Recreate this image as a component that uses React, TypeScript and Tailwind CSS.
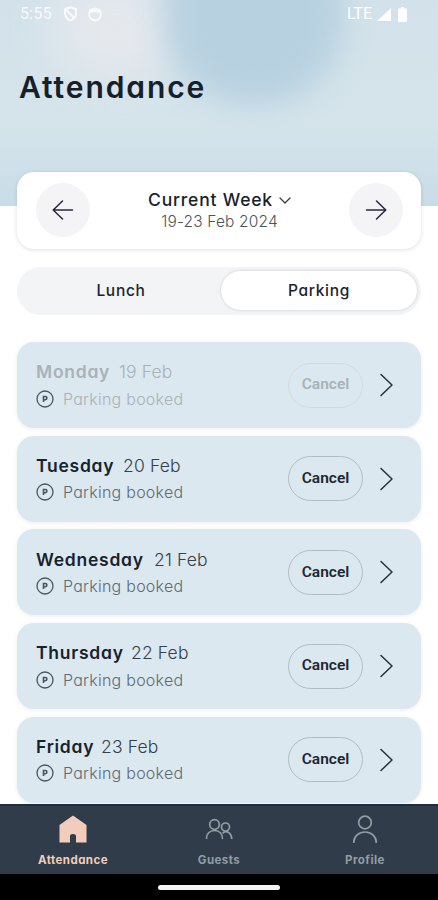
import React from "react";

type Day = { name: string; date: string; past?: boolean; nameClass: string };

const days: Day[] = [
  { name: "Monday", date: "19 Feb", past: true, nameClass: "w-[74px]" },
  { name: "Tuesday", date: "20 Feb", nameClass: "w-[78px]" },
  { name: "Wednesday", date: "21 Feb", nameClass: "w-[109px]" },
  { name: "Thursday", date: "22 Feb", nameClass: "w-[86px]" },
  { name: "Friday", date: "23 Feb", nameClass: "w-[56px]" },
];

function StatusBar() {
  return (
    <div className="relative flex h-[28px] items-center px-[20px] text-white">
      <span className="w-[32px] whitespace-nowrap font-['Roboto'] text-[16px] tracking-[0.3px] opacity-80">5:55</span>
      <svg className="ml-[11px] opacity-80" width="15" height="16" viewBox="0 0 15 16" fill="none" stroke="currentColor" strokeWidth="2">
        <path d="M7.5 1.2 13 3v4.6c0 3.2-2.2 5.6-5.5 7-3.3-1.4-5.5-3.8-5.5-7V3z" />
        <path d="M3 3.5 11 12" />
      </svg>
      <svg className="ml-[9px] opacity-80" width="16" height="16" viewBox="0 0 16 16" fill="none" stroke="currentColor" strokeWidth="1.8">
        <circle cx="8" cy="8.5" r="5.9" />
        <path d="M2.500 2.500 5 3.200 8 1.500l3 1.700 2.500-.7.5 4.500L8 6 2 7z" fill="currentColor" stroke="none" />
      </svg>
      <span className="ml-auto font-['Roboto'] text-[16px]">LTE</span>
      <svg className="ml-[5px]" width="14" height="13" viewBox="0 0 14 13" fill="currentColor"><path d="M14 0v13H0z" /></svg>
      <svg className="ml-[7px] mr-[11px]" width="9" height="15" viewBox="0 0 9 15" fill="currentColor">
        <path d="M3 0h3v1.500h2q1 0 1 1V14q0 1-1 1H1q-1 0-1-1V2.500q0-1 1-1h2z" />
      </svg>
    </div>
  );
}

function Arrow({ flip = false }: { flip?: boolean }) {
  return (
    <button className="mb-px flex size-[54px] items-center justify-center rounded-full bg-[#f4f4f6]">
      <svg className={flip ? "rotate-180" : ""} width="22" height="22" viewBox="0 0 22 22" fill="none" stroke="#2a2640" strokeWidth="1.500" strokeLinecap="round" strokeLinejoin="round">
        <path d="M20.500 11H1.200M10.500 2 1.200 11l9.300 9" />
      </svg>
    </button>
  );
}

function DayCard({ day }: { day: Day }) {
  return (
    <div className="flex h-[86px] shrink-0 items-center rounded-[17px] bg-[#dce8ef] pl-[19px] pr-[28px] shadow-[0_1px_4px_rgba(40,30,30,0.08)]">
      <div className="flex flex-col pt-px">
        <div className={`flex h-[26px] items-center whitespace-nowrap text-[17.500px] ${day.past ? "text-[#a7b2b9]" : "text-[#17222c]"}`}>
          <span className={`font-semibold tracking-[0.750px] ${day.nameClass}`}>{day.name}</span>
          <span className={`ml-[9px] font-light tracking-[0.150px] ${day.past ? "" : "text-[#34404a]"}`}>{day.date}</span>
        </div>
        <div className={`flex h-[26px] items-center whitespace-nowrap text-[16px] font-light ${day.past ? "text-[#a7b2b9]" : "text-[#5e6a74]"}`}>
          <svg className="mr-[9px]" width="18" height="18" viewBox="0 0 18 18" fill="none" stroke="#485663" strokeWidth="1.300">
            <circle cx="9" cy="9" r="8" />
            <path d="M7.500 12V6.500h1.800a1.600 1.600 0 0 1 0 3.200H7.500" strokeWidth="1.600" />
          </svg>
          <span className="tracking-[0.250px]">Parking booked</span>
        </div>
      </div>
      <button className={`ml-auto flex h-[45px] w-[75px] items-center justify-center rounded-full border font-['Roboto'] text-[15.500px] font-semibold ${day.past ? "border-[#d0dbe1] text-[#a7b2b9]" : "border-[#b2bdc3] text-[#1c2731]"}`}>
        Cancel
      </button>
      <svg className="ml-[17px]" width="13" height="24" viewBox="0 0 13 24" fill="none" stroke="#25303b" strokeWidth="1.500" strokeLinecap="round" strokeLinejoin="round">
        <path d="m1 1.500 11 10.500L1 22.500" />
      </svg>
    </div>
  );
}

export default function App() {
  return (
    <div className="flex h-[900px] w-[438px] flex-col overflow-hidden bg-white font-['Inter','Liberation_Sans',sans-serif] [font-feature-settings:'cv11']">
      <header className="relative h-[206px] shrink-0 overflow-hidden bg-[linear-gradient(180deg,#d3e2ea_0%,#d5e4eb_60%,#c8dce7_100%)]">
        <div className="absolute -top-[20px] left-[50px] h-[100px] w-[130px] rounded-full bg-[#e4e8ed] blur-[22px]" />
        <div className="absolute -top-[85px] left-[164px] h-[190px] w-[180px] rounded-[85px] bg-[#b8d1e0] blur-[15px]" />
        <StatusBar />
        <h1 className="relative ml-[19px] mt-[38px] text-[30px] font-semibold leading-[42px] tracking-[1.900px] text-[#14212c]">Attendance</h1>
      </header>

      <section className="relative mx-[17px] -mt-[34px] flex h-[77px] shrink-0 items-center justify-between rounded-[17px] bg-white pl-[19px] pr-[18px] shadow-[0_1px_4px_rgba(0,0,0,0.13)]">
        <Arrow />
        <div className="flex flex-col items-center whitespace-nowrap">
          <div className="flex h-[22px] items-center text-[17.500px] font-medium tracking-[0.800px] text-[#18222b]">
            Current Week
            <svg className="ml-[6px]" width="12" height="7" viewBox="0 0 12 7" fill="none" stroke="#333b45" strokeWidth="1.300" strokeLinecap="round" strokeLinejoin="round"><path d="m1 1 5 5 5-5" /></svg>
          </div>
          <div className="flex h-[20px] items-center text-[15.500px] font-light tracking-[0.150px] text-[#4b5259]">19-23 Feb 2024</div>
        </div>
        <Arrow flip />
      </section>

      <div className="mx-[17px] mt-[18px] flex h-[48px] shrink-0 rounded-full bg-[#f2f4f6] p-[4px] text-[15.500px] font-medium tracking-[0.700px] text-[#1b242d]">
        <button className="flex flex-1 items-center justify-center">Lunch</button>
        <button className="flex h-[39px] w-[196px] items-center justify-center rounded-full bg-white shadow-[0_0_3px_rgba(0,0,0,0.18)]">Parking</button>
      </div>

      <main className="flex min-h-0 flex-1 flex-col gap-[7.700px] overflow-hidden px-[17px] pt-[27px]">
        {days.map((d) => <DayCard key={d.name} day={d} />)}
      </main>

      <nav className="grid h-[70px] shrink-0 grid-cols-3 border-t-2 border-[#1d2e3e] bg-[#303c49] text-[11.500px] font-bold tracking-[0.450px] text-[#939da6]">
        <div className="flex flex-col items-center pt-[9px] text-[#f3cdbb]">
          <svg width="28" height="28" viewBox="0 0 28 28" fill="currentColor"><path d="M14 .5 27.500 10v17.500H17V21q0-2-3-2t-3 2v6.500H.500V10z" /></svg>
          <span className="mt-[9px] leading-[16px]">Attendance</span>
        </div>
        <div className="flex flex-col items-center pt-[9px]">
          <svg width="28" height="28" viewBox="0 0 28 28" fill="none" stroke="currentColor" strokeWidth="1.700">
            <circle cx="9.500" cy="9.500" r="4.800" /><path d="M1.500 24c0-5 3-8.500 8-8.500s8 3.500 8 8.500" />
            <circle cx="20.500" cy="12" r="4" /><path d="M17.500 18.300c4-3.500 9-.8 9.200 5.700" />
          </svg>
          <span className="mt-[9px] leading-[16px]">Guests</span>
        </div>
        <div className="flex flex-col items-center pt-[9px]">
          <svg width="28" height="28" viewBox="0 0 28 28" fill="none" stroke="currentColor" strokeWidth="1.700">
            <circle cx="14" cy="7.500" r="6.300" /><path d="M2.800 28v-1a11.200 10 0 0 1 22.400 0v1" />
          </svg>
          <span className="mt-[9px] leading-[16px]">Profile</span>
        </div>
      </nav>
      <footer className="flex h-[26px] shrink-0 items-center justify-center bg-black">
        <div className="h-[5px] w-[122px] rounded-full bg-[#f4f4f4]" />
      </footer>
    </div>
  );
}
